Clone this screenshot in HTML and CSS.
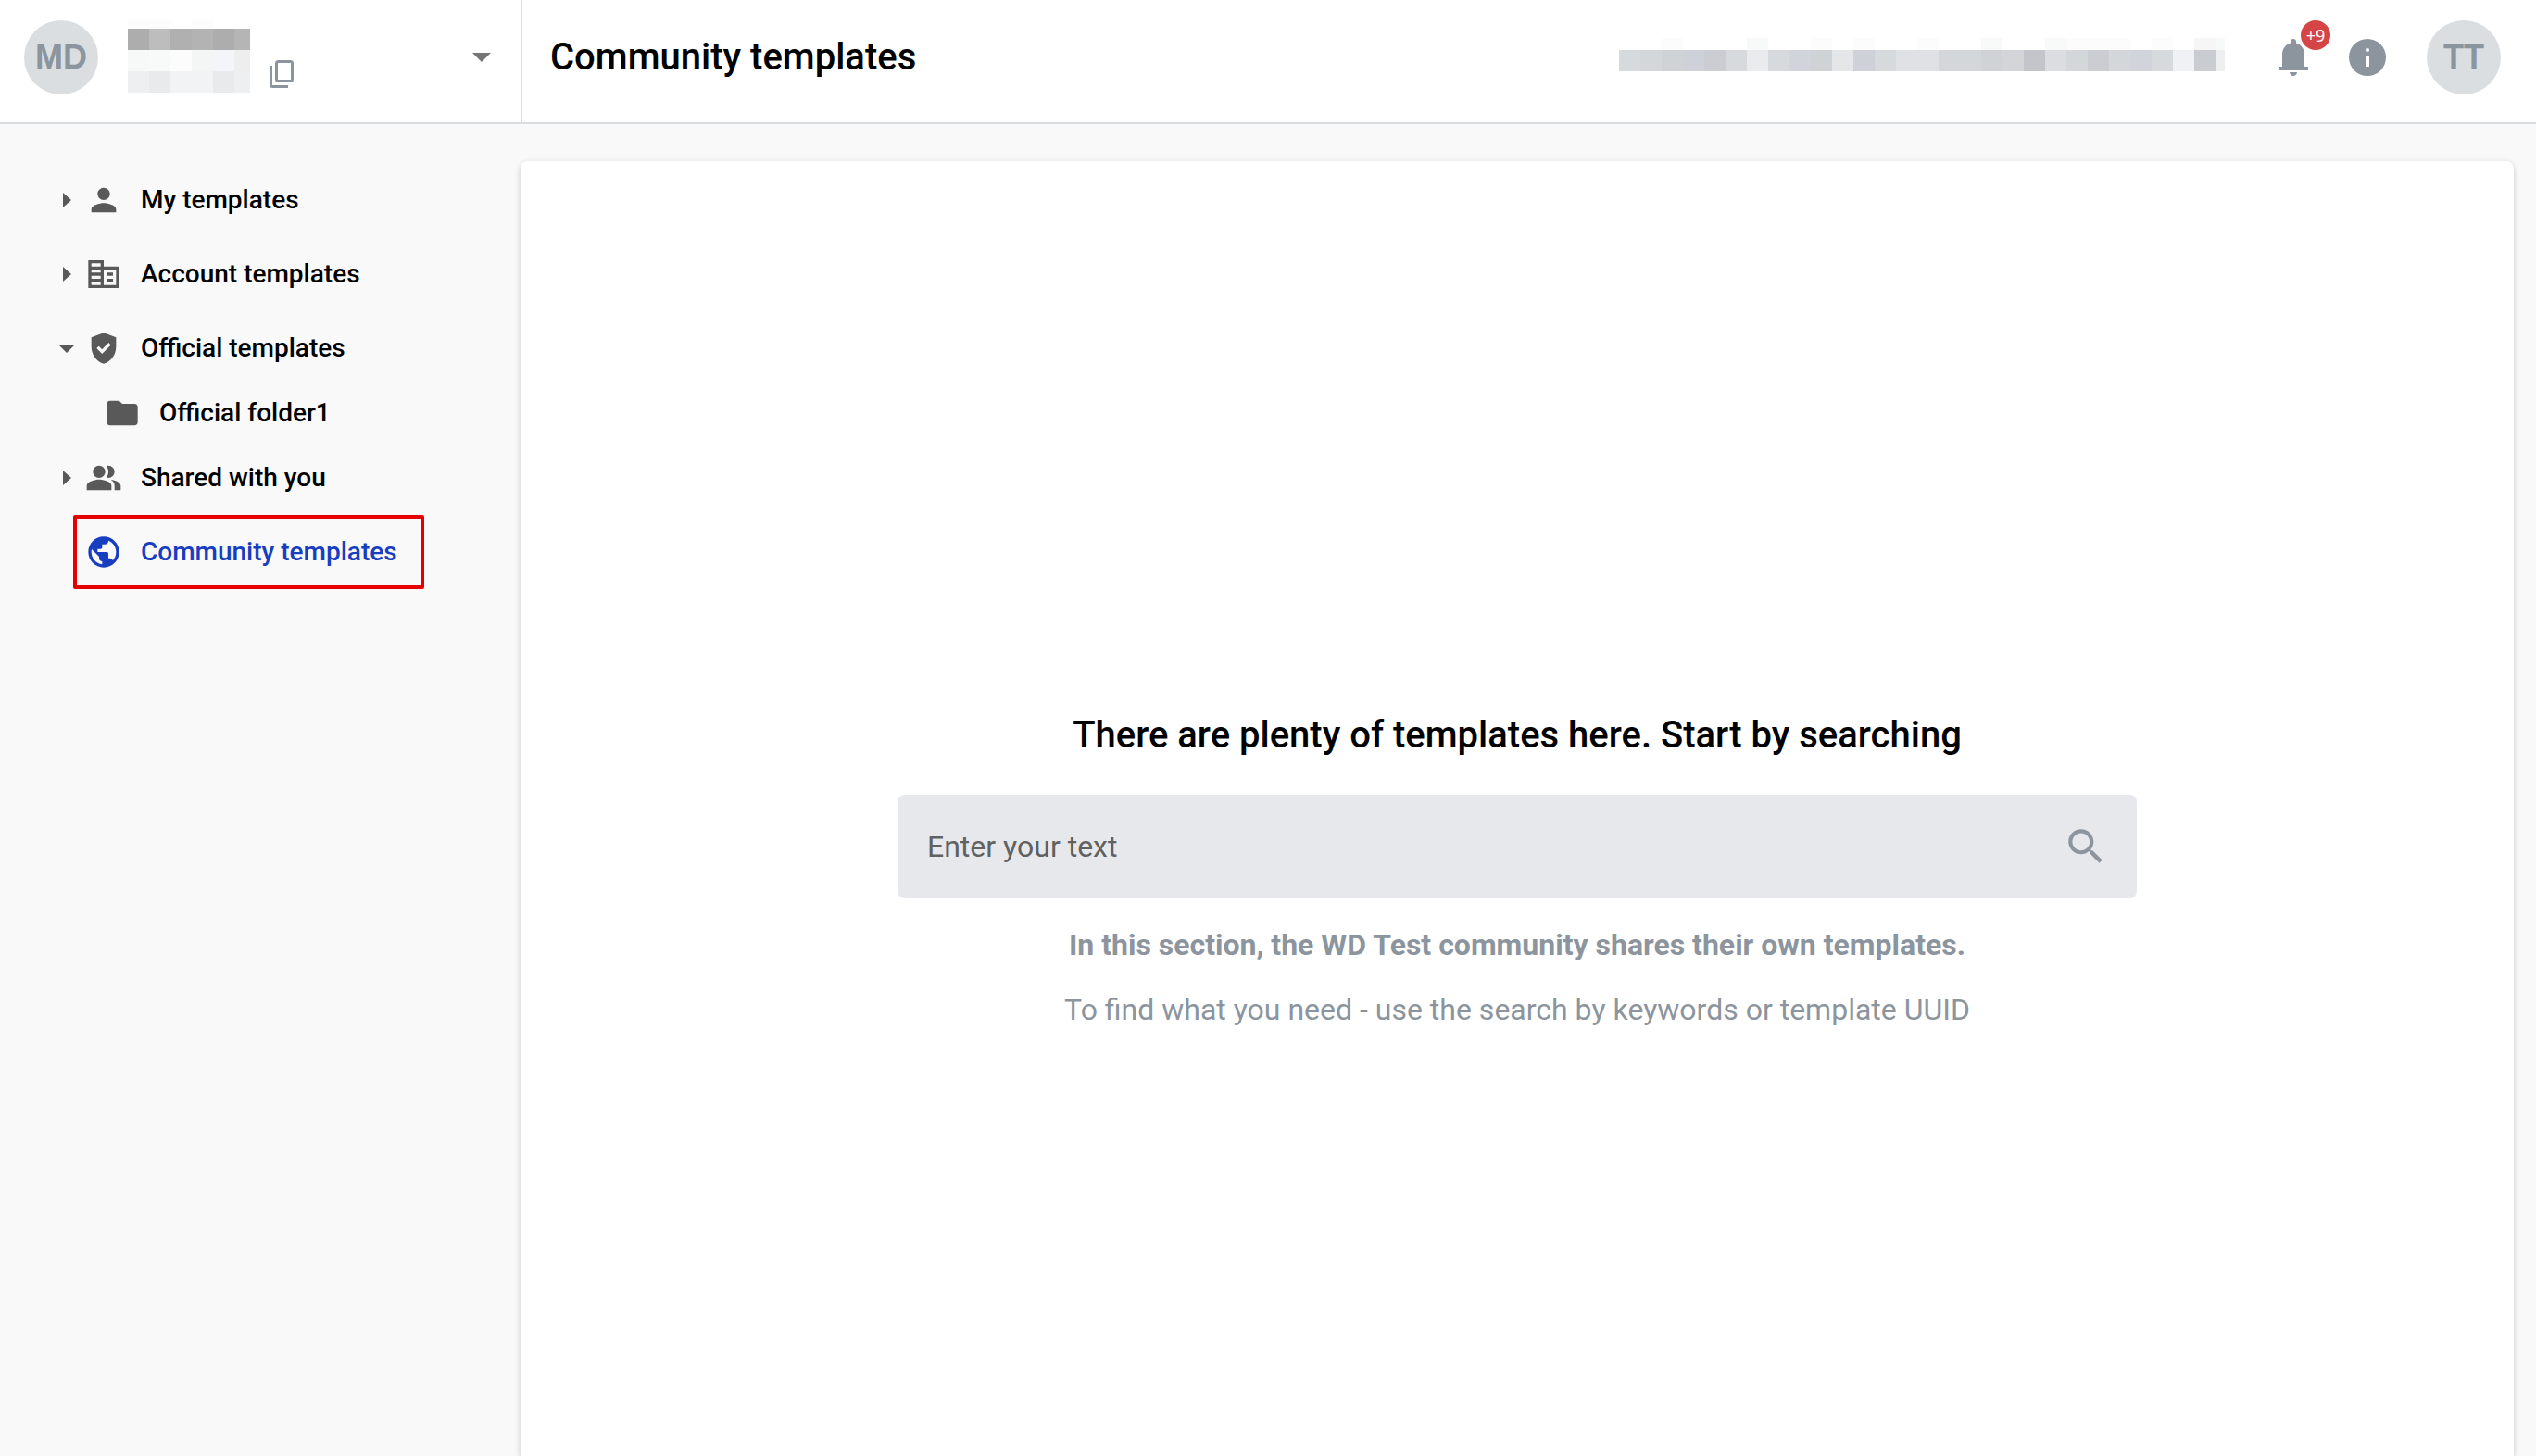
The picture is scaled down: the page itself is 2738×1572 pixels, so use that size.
FILE: index.html
```html
<!DOCTYPE html>
<html lang="en">
<head>
<meta charset="utf-8">
<title>Community templates</title>
<link rel="stylesheet" href="styles.css">
</head>
<body>
<header class="header">
  <div class="account">
    <span class="avatar">MD</span>
    <svg class="masked-name" viewBox="0 0 132 79" shape-rendering="crispEdges" aria-hidden="true">
      <path fill="#fcfcfc" d="M0 0h46v10H0zM69 0h23v10H69z"/>
      <path fill="#adadad" d="M0 10h23v23H0zM92 10h23v23H92z"/>
      <path fill="#bdbdbd" d="M23 10h23v23H23z"/>
      <path fill="#b0b0b0" d="M46 10h23v23H46z"/>
      <path fill="#b3b3b3" d="M69 10h23v23H69z"/>
      <path fill="#b5b5b5" d="M115 10h17v23h-17z"/>
      <path fill="#f7f9f8" d="M0 33h23v23H0z"/>
      <path fill="#f8faf9" d="M23 33h23v23H23z"/>
      <path fill="#fcfcfc" d="M46 33h23v23H46z"/>
      <path fill="#f4f6f5" d="M69 33h23v23H69z"/>
      <path fill="#f4f5f8" d="M92 33h23v23H92z"/>
      <path fill="#eeeeee" d="M115 33h17v23h-17z"/>
      <path fill="#eeeff1" d="M0 56h23v23H0zM115 56h17v23h-17z"/>
      <path fill="#e9eaec" d="M23 56h23v23H23zM92 56h23v23H92z"/>
      <path fill="#f2f3f5" d="M46 56h46v23H46z"/>
    </svg>
    <button class="icon-button copy" type="button" aria-label="Copy">
      <svg viewBox="0 0 26 30" width="26" height="30" fill="none" stroke="#8c959e" aria-hidden="true"><rect x="7.500" y="1.500" width="17" height="21" rx="2" stroke-width="3"/><path d="M1.500 6v20.500a2 2 0 0 0 2 2H20" stroke-width="3"/></svg>
    </button>
    <button class="icon-button switcher" type="button" aria-label="Switch account">
      <svg viewBox="0 0 20 10" width="20" height="10" fill="#757575" aria-hidden="true"><path d="M0 0h20L10 10z"/></svg>
    </button>
  </div>
  <h1 class="page-title">Community templates</h1>
  <div class="user">
    <svg class="masked-email" viewBox="0 0 654 36" shape-rendering="crispEdges" aria-hidden="true">
      <path fill="#fcfcfc" d="M46 0h23v13H46zM207 0h23v13h-23zM253 0h23v13h-23zM322 0h23v13h-23zM483 0h46v13h-46zM529 0h23v13h-23zM575 0h23v13h-23z"/>
      <path fill="#f8faf9" d="M138 0h23v13h-23zM391 0h23v13h-23zM460 0h23v13h-23zM644 0h10v13h-10z"/>
      <path fill="#f6f6f6" d="M621 0h23v13h-23z"/>
      <path fill="#d6dadc" d="M0 13h23v23H0zM115 13h23v23h-23zM161 13h23v23h-23zM276 13h23v23h-23zM575 13h23v23h-23z"/>
      <path fill="#d3d7d9" d="M23 13h23v23H23zM345 13h46v23h-46zM483 13h23v23h-23zM529 13h23v23h-23z"/>
      <path fill="#cfd3d5" d="M46 13h23v23H46zM207 13h23v23h-23zM391 13h23v23h-23z"/>
      <path fill="#ced1d7" d="M69 13h23v23H69zM253 13h23v23h-23z"/>
      <path fill="#cbcdd3" d="M92 13h23v23H92zM506 13h23v23h-23z"/>
      <path fill="#eaebed" d="M138 13h23v23h-23z"/>
      <path fill="#d1d4da" d="M184 13h23v23h-23zM552 13h23v23h-23z"/>
      <path fill="#e5e6e8" d="M230 13h23v23h-23z"/>
      <path fill="#e0e1e4" d="M299 13h46v23h-46z"/>
      <path fill="#d4d5d8" d="M414 13h23v23h-23z"/>
      <path fill="#c3c5cb" d="M437 13h23v23h-23z"/>
      <path fill="#dcdde0" d="M460 13h23v23h-23z"/>
      <path fill="#f0f1f4" d="M598 13h23v23h-23z"/>
      <path fill="#c9ccd1" d="M621 13h23v23h-23z"/>
      <path fill="#edeff1" d="M644 13h10v23h-10z"/>
    </svg>
    <button class="icon-button bell" type="button" aria-label="Notifications">
      <svg viewBox="0 0 24 24" width="48" height="48" fill="#8c959e" aria-hidden="true"><path d="M12 22c1.100 0 2-.9 2-2h-4c0 1.100.9 2 2 2zM4 17h2v-6.500C6 7.500 7.700 5.100 10.500 4.300V3.500a1.500 1.500 0 0 1 3 0v.8C16.300 5.100 18 7.500 18 10.500V17h2v2H4z"/></svg>
      <span class="badge">+9</span>
    </button>
    <button class="icon-button" type="button" aria-label="Information">
      <svg viewBox="2 2 20 20" width="40" height="40" fill="#8c959e" aria-hidden="true"><path fill-rule="evenodd" d="M12 2a10 10 0 1 0 0 20 10 10 0 0 0 0-20zm1 15h-2v-6h2zm-1-10a1 1 0 1 1 0 2 1 1 0 0 1 0-2z"/></svg>
    </button>
    <span class="avatar profile">TT</span>
  </div>
</header>
<div class="layout">
  <nav class="sidebar" aria-label="Template folders">
    <ul class="tree">
      <li class="item">
        <button class="icon-button toggle" type="button" aria-label="Expand My templates"><svg viewBox="0 0 24 24" width="24" height="24" aria-hidden="true"><path d="M8 4l9 8-9 8z"/></svg></button>
        <a class="link" href="#my"><svg viewBox="0 0 24 24" width="40" height="40" aria-hidden="true"><path d="M12 12c2.210 0 4-1.790 4-4s-1.790-4-4-4-4 1.790-4 4 1.790 4 4 4zm0 2c-2.670 0-8 1.340-8 4v2h16v-2c0-2.660-5.330-4-8-4z"/></svg>My templates</a>
      </li>
      <li class="item">
        <button class="icon-button toggle" type="button" aria-label="Expand Account templates"><svg viewBox="0 0 24 24" width="24" height="24" aria-hidden="true"><path d="M8 4l9 8-9 8z"/></svg></button>
        <a class="link" href="#account"><svg viewBox="0 0 24 24" width="40" height="40" aria-hidden="true"><path d="M12 7V3H2v18h20V7H12zm-2 12H4v-2h6v2zm0-4H4v-2h6v2zm0-4H4V9h6v2zm0-4H4V5h6v2zm10 12h-8V9h8v10zm-2-8h-4v2h4v-2zm0 4h-4v2h4v-2z"/></svg>Account templates</a>
      </li>
      <li class="item">
        <button class="icon-button toggle" type="button" aria-label="Collapse Official templates"><svg viewBox="0 0 24 24" width="24" height="24" aria-hidden="true"><path d="M4 9h16l-8 8z"/></svg></button>
        <a class="link" href="#official"><svg viewBox="0 0 24 24" width="40" height="40" aria-hidden="true"><path d="M12 2L4 5v6.090c0 5.050 3.410 9.760 8 10.910 4.590-1.150 8-5.860 8-10.910V5l-8-3zm-1.060 13.540L7.400 12l1.410-1.410 2.120 2.120 4.240-4.240 1.410 1.410-5.640 5.660z"/></svg>Official templates</a>
      </li>
      <li class="item child">
        <a class="link" href="#folder1"><svg viewBox="0 0 24 24" width="40" height="40" aria-hidden="true"><path d="M10 4H4c-1.100 0-1.990.9-1.990 2L2 18c0 1.100.9 2 2 2h16c1.100 0 2-.9 2-2V8c0-1.100-.9-2-2-2h-8l-2-2z"/></svg>Official folder1</a>
      </li>
      <li class="item">
        <button class="icon-button toggle" type="button" aria-label="Expand Shared with you"><svg viewBox="0 0 24 24" width="24" height="24" aria-hidden="true"><path d="M8 4l9 8-9 8z"/></svg></button>
        <a class="link" href="#shared"><svg viewBox="0 0 24 24" width="40" height="40" aria-hidden="true"><path d="M16.670 13.130C18.040 14.060 19 15.320 19 17v3h4v-3c0-2.180-3.570-3.470-6.330-3.870zM15 12c2.210 0 4-1.790 4-4s-1.790-4-4-4c-.47 0-.91.1-1.330.24C14.500 5.270 15 6.580 15 8s-.5 2.730-1.330 3.760c.42.14.86.24 1.330.24zM9 12c2.210 0 4-1.790 4-4s-1.790-4-4-4-4 1.790-4 4 1.790 4 4 4zm0 1c-2.670 0-8 1.340-8 4v3h16v-3c0-2.660-5.330-4-8-4z"/></svg>Shared with you</a>
      </li>
      <li class="item current">
        <a class="link" href="#community" aria-current="page"><svg viewBox="0 0 24 24" width="40" height="40" aria-hidden="true"><path d="M12 2C6.480 2 2 6.480 2 12s4.480 10 10 10 10-4.480 10-10S17.520 2 12 2zm-1 17.930c-3.950-.49-7-3.850-7-7.930 0-.62.08-1.210.21-1.790L9 15v1c0 1.100.9 2 2 2v1.930zm6.900-2.540c-.26-.81-1-1.390-1.900-1.390h-1v-3c0-.55-.45-1-1-1H8v-2h2c.55 0 1-.45 1-1V7h2c1.100 0 2-.9 2-2v-.41c2.930 1.190 5 4.060 5 7.410 0 2.080-.8 3.970-2.100 5.390z"/></svg>Community templates</a>
      </li>
    </ul>
  </nav>
  <main class="card">
    <h2 class="heading">There are plenty of templates here. Start by searching</h2>
    <form class="search" role="search">
      <input class="search-input" type="text" placeholder="Enter your text" aria-label="Search templates">
      <button class="icon-button" type="submit" aria-label="Search">
        <svg viewBox="0 0 24 24" width="50" height="50" fill="#8c959e" aria-hidden="true"><path d="M15.500 14h-.79l-.28-.27C15.410 12.590 16 11.110 16 9.500 16 5.910 13.090 3 9.500 3S3 5.910 3 9.500 5.910 16 9.500 16c1.610 0 3.090-.59 4.230-1.570l.27.28v.79l5 4.990L20.490 19l-4.990-5zm-6 0C7.010 14 5 11.990 5 9.500S7.010 5 9.500 5 14 7.010 14 9.500 11.990 14 9.500 14z"/></svg>
      </button>
    </form>
    <p class="note strong">In this section, the WD Test community shares their own templates.</p>
    <p class="note">To find what you need - use the search by keywords or template UUID</p>
  </main>
</div>
</body>
</html>
```
FILE: styles.css
```css
* {
  box-sizing: border-box;
}

body {
  margin: 0;
  min-height: 100vh;
  display: flex;
  flex-direction: column;
  background: #f9f9f9;
  color: #000;
  font-family: Roboto, "Liberation Sans", sans-serif;
}

svg {
  display: block;
  flex: none;
}

.icon-button {
  display: block;
  flex: none;
  padding: 0;
  border: 0;
  background: none;
  cursor: pointer;
}

.header {
  display: flex;
  height: 134px;
  background: #fff;
  border-bottom: 2px solid #d9dde0;
}

.account {
  display: flex;
  align-items: center;
  flex: none;
  width: 564px;
  padding: 0 32px 8px 26px;
  border-right: 2px solid #d9dde0;
}

.avatar {
  display: flex;
  align-items: center;
  justify-content: center;
  flex: none;
  width: 80px;
  height: 80px;
  border-radius: 50%;
  background: #dadee1;
  color: #8c959e;
  font: bold 36px/40px "Liberation Sans", sans-serif;
}

.masked-name {
  width: 132px;
  height: 79px;
  margin: 0 0 4px 32px;
}

.copy {
  margin: 36px 0 0 21px;
}

.switcher {
  margin-left: auto;
}

.page-title {
  margin: 0;
  padding: 38px 30px 0;
  font-size: 40px;
  line-height: 48px;
  font-weight: 500;
  white-space: nowrap;
}

.user {
  display: flex;
  align-items: center;
  margin-left: auto;
  padding: 0 38px 8px 0;
}

.masked-email {
  width: 654px;
  height: 36px;
  margin: 0 50px 6px 0;
}

.bell {
  position: relative;
  margin-right: 36px;
}

.badge {
  position: absolute;
  top: -16px;
  right: -16px;
  width: 32px;
  height: 32px;
  border-radius: 50%;
  background: #d64545;
  color: #fff;
  font: 18px/32px "Noto Sans", sans-serif;
  text-align: center;
}

.profile {
  margin-left: 44px;
}

.layout {
  display: flex;
  flex: 1;
}

.sidebar {
  flex: none;
  width: 562px;
  padding-top: 42px;
}

.tree {
  margin: 0;
  padding: 0 0 0 60px;
  list-style: none;
}

.item {
  display: flex;
  align-items: center;
  gap: 8px;
  height: 80px;
}

.item svg {
  fill: #595959;
}

.link {
  display: flex;
  align-items: center;
  gap: 20px;
  color: #000;
  font-size: 28px;
  line-height: 40px;
  font-weight: 500;
  text-decoration: none;
  white-space: nowrap;
}

.child {
  height: 60px;
  padding-left: 52px;
}

.current {
  width: fit-content;
  margin-left: 19px;
  padding: 0 25px 0 9px;
  border: 4px solid #e60000;
  border-radius: 2px;
}

.current .link {
  color: #173dc1;
}

.current svg {
  fill: #173dc1;
}

.card {
  flex: 1;
  margin: 40px 24px 0 0;
  padding: 596px 40px 40px;
  background: #fff;
  border-radius: 8px 8px 0 0;
  box-shadow: 0 2px 6px rgba(0, 0, 0, 0.2);
  text-align: center;
}

.heading {
  margin: 0 0 40px;
  font-size: 40px;
  line-height: 48px;
  font-weight: 500;
}

.search {
  display: flex;
  align-items: center;
  max-width: 1338px;
  height: 112px;
  margin: 0 auto 30px;
  padding: 0 30px 0 32px;
  border-radius: 8px;
  background: #e6e8ec;
}

.search-input {
  flex: 1;
  min-width: 0;
  padding: 0;
  border: 0;
  outline: 0;
  background: none;
  color: #000;
  font: 32px/40px Roboto, sans-serif;
}

.search-input::placeholder {
  color: #616161;
  opacity: 1;
}

.note {
  margin: 0 0 30px;
  color: #8c959e;
  font-size: 32px;
  line-height: 40px;
}

.strong {
  font-weight: 700;
}
```
